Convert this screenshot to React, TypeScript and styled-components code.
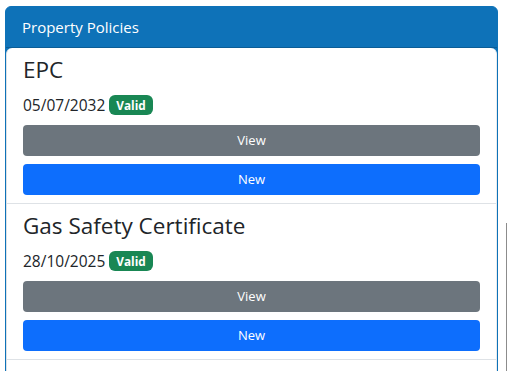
import React from "react";
import styled, { createGlobalStyle } from "styled-components";

const GlobalStyle = createGlobalStyle`
  html, body {
    margin: 0;
    padding: 0;
    background: #ffffff;
    overflow: hidden;
  }
  body {
    font-family: "Open Sans", "Noto Sans", sans-serif;
    color: #212529;
  }
  * { box-sizing: border-box; }
`;

const Page = styled.div`
  position: relative;
  width: 507px;
  height: 371px;
  padding: 6px 9px 0 5px;
  overflow: hidden;
`;

const Card = styled.section`
  min-height: 420px;
  background: #0e72b8;
  border: 1px solid #0e72b8;
  border-radius: 6px;
  display: flex;
  flex-direction: column;
`;

const CardHeader = styled.header`
  padding: 8px 16px;
  line-height: 24px;
  font-size: 15px;
  color: #ffffff;
  border-bottom: 1px solid rgba(0, 0, 0, 0.18);
`;

const List = styled.ul`
  flex: 1;
  list-style: none;
  margin: 0;
  padding: 0;
  background: #ffffff;
  border: 1px solid #dee2e6;
  border-top: 0;
  border-right-color: #e9ecef;
  border-radius: 6px 6px 0 0;
  display: flex;
  flex-direction: column;
`;

const Item = styled.li`
  padding: 8px 16px;
  border-bottom: 1px solid #dee2e6;
  display: flex;
  flex-direction: column;
`;

const Title = styled.h3`
  margin: 0 0 8px;
  font-size: 22.5px;
  font-weight: 400;
  line-height: 28.8px;
  color: #212529;
`;

const DateRow = styled.div`
  display: flex;
  align-items: center;
  gap: 4px;
  font-size: 15.5px;
  line-height: 24px;
  color: #212529;
`;

const Badge = styled.span<{ $tone: "success" | "danger" }>`
  display: inline-flex;
  align-items: center;
  height: 20px;
  padding: 0 7px;
  border-radius: 6px;
  font-size: 11.8px;
  font-weight: 700;
  color: #ffffff;
  background: ${(p) => (p.$tone === "success" ? "#198754" : "#dc3545")};
`;

const Actions = styled.div`
  margin-top: 8px;
  display: grid;
  gap: 8px;
`;

const Button = styled.button<{ $variant: "secondary" | "primary" }>`
  height: 31px;
  border: 1px solid transparent;
  border-radius: 4px;
  font-family: inherit;
  font-size: 13px;
  line-height: 21px;
  color: #ffffff;
  cursor: pointer;
  background: ${(p) => (p.$variant === "secondary" ? "#6c757d" : "#0d6efd")};
`;

const ScrollEdge = styled.div`
  position: absolute;
  right: 0;
  top: 223px;
  bottom: 0;
  width: 1px;
  background: #8c8c8c;
`;

const policies = [
  { name: "EPC", date: "05/07/2032", status: "Valid" },
  { name: "Gas Safety Certificate", date: "28/10/2025", status: "Valid" },
];

export default function App() {
  return (
    <>
      <GlobalStyle />
      <Page>
        <Card>
          <CardHeader>Property Policies</CardHeader>
          <List>
            {policies.map((p) => (
              <Item key={p.name}>
                <Title>{p.name}</Title>
                <DateRow>
                  <span>{p.date}</span>
                  <Badge $tone="success">{p.status}</Badge>
                </DateRow>
                <Actions>
                  <Button $variant="secondary">View</Button>
                  <Button $variant="primary">New</Button>
                </Actions>
              </Item>
            ))}
          </List>
        </Card>
        <ScrollEdge />
      </Page>
    </>
  );
}
